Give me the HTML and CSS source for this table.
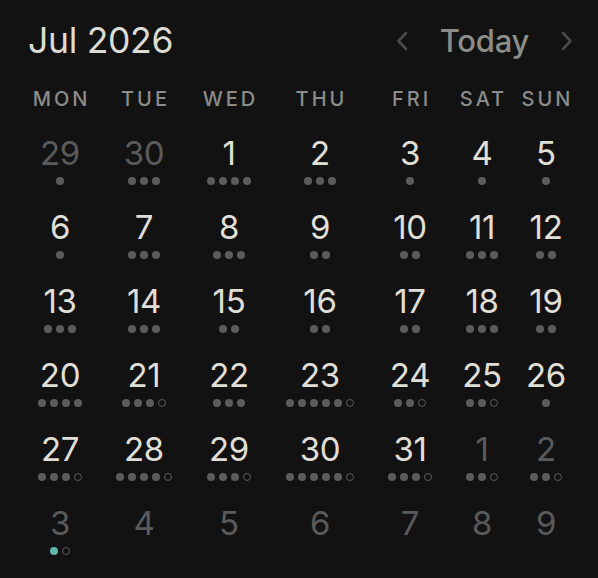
FILE: index.html
```html
<!DOCTYPE html>
<html>
<head>
<meta charset="utf-8">
<link rel="stylesheet" href="styles.css">
</head>
<body>
<div class="cal">
  <div class="head">
    <div class="title">Jul 2026</div>
    <div class="nav">
      <svg class="chev" width="12" height="20" viewBox="0 0 12 20"><path d="M10 2 L2.5 10 L10 18" fill="none" stroke="currentColor" stroke-width="2.6" stroke-linecap="round" stroke-linejoin="round"/></svg>
      <span class="today">Today</span>
      <svg class="chev" width="12" height="20" viewBox="0 0 12 20"><path d="M2 2 L9.5 10 L2 18" fill="none" stroke="currentColor" stroke-width="2.6" stroke-linecap="round" stroke-linejoin="round"/></svg>
    </div>
  </div>
  <div class="grid wk">
    <span>MON</span><span>TUE</span><span>WED</span><span>THU</span><span>FRI</span><span>SAT</span><span>SUN</span>
  </div>
  <div class="grid days">
    <div class="cell other"><span class="n">29</span><div class="dots"><i></i></div></div>
    <div class="cell other"><span class="n">30</span><div class="dots"><i></i><i></i><i></i></div></div>
    <div class="cell"><span class="n">1</span><div class="dots"><i></i><i></i><i></i><i></i></div></div>
    <div class="cell"><span class="n">2</span><div class="dots"><i></i><i></i><i></i></div></div>
    <div class="cell"><span class="n">3</span><div class="dots"><i></i></div></div>
    <div class="cell"><span class="n">4</span><div class="dots"><i></i></div></div>
    <div class="cell"><span class="n">5</span><div class="dots"><i></i></div></div>

    <div class="cell"><span class="n">6</span><div class="dots"><i></i></div></div>
    <div class="cell"><span class="n">7</span><div class="dots"><i></i><i></i><i></i></div></div>
    <div class="cell"><span class="n">8</span><div class="dots"><i></i><i></i><i></i></div></div>
    <div class="cell"><span class="n">9</span><div class="dots"><i></i><i></i></div></div>
    <div class="cell"><span class="n">10</span><div class="dots"><i></i><i></i></div></div>
    <div class="cell"><span class="n">11</span><div class="dots"><i></i><i></i><i></i></div></div>
    <div class="cell"><span class="n">12</span><div class="dots"><i></i><i></i></div></div>

    <div class="cell"><span class="n">13</span><div class="dots"><i></i><i></i><i></i></div></div>
    <div class="cell"><span class="n">14</span><div class="dots"><i></i><i></i><i></i></div></div>
    <div class="cell"><span class="n">15</span><div class="dots"><i></i><i></i></div></div>
    <div class="cell"><span class="n">16</span><div class="dots"><i></i><i></i></div></div>
    <div class="cell"><span class="n">17</span><div class="dots"><i></i><i></i></div></div>
    <div class="cell"><span class="n">18</span><div class="dots"><i></i><i></i><i></i></div></div>
    <div class="cell"><span class="n">19</span><div class="dots"><i></i><i></i></div></div>

    <div class="cell"><span class="n">20</span><div class="dots"><i></i><i></i><i></i><i></i></div></div>
    <div class="cell"><span class="n">21</span><div class="dots"><i></i><i></i><i></i><i class="o"></i></div></div>
    <div class="cell"><span class="n">22</span><div class="dots"><i></i><i></i><i></i></div></div>
    <div class="cell"><span class="n">23</span><div class="dots"><i></i><i></i><i></i><i></i><i></i><i class="o"></i></div></div>
    <div class="cell"><span class="n">24</span><div class="dots"><i></i><i></i><i class="o"></i></div></div>
    <div class="cell"><span class="n">25</span><div class="dots"><i></i><i></i><i class="o"></i></div></div>
    <div class="cell"><span class="n">26</span><div class="dots"><i></i></div></div>

    <div class="cell"><span class="n">27</span><div class="dots"><i></i><i></i><i></i><i class="o"></i></div></div>
    <div class="cell"><span class="n">28</span><div class="dots"><i></i><i></i><i></i><i></i><i class="o"></i></div></div>
    <div class="cell"><span class="n">29</span><div class="dots"><i></i><i></i><i></i><i class="o"></i></div></div>
    <div class="cell"><span class="n">30</span><div class="dots"><i></i><i></i><i></i><i></i><i></i><i class="o"></i></div></div>
    <div class="cell"><span class="n">31</span><div class="dots"><i></i><i></i><i></i><i class="o"></i></div></div>
    <div class="cell other"><span class="n">1</span><div class="dots"><i></i><i></i><i class="o"></i></div></div>
    <div class="cell other"><span class="n">2</span><div class="dots"><i></i><i></i><i class="o"></i></div></div>

    <div class="cell other"><span class="n">3</span><div class="dots"><i class="t"></i><i class="o"></i></div></div>
    <div class="cell other"><span class="n">4</span><div class="dots"></div></div>
    <div class="cell other"><span class="n">5</span><div class="dots"></div></div>
    <div class="cell other"><span class="n">6</span><div class="dots"></div></div>
    <div class="cell other"><span class="n">7</span><div class="dots"></div></div>
    <div class="cell other"><span class="n">8</span><div class="dots"></div></div>
    <div class="cell other"><span class="n">9</span><div class="dots"></div></div>
  </div>
</div>
</body>
</html>
```

FILE: styles.css
```css
html, body {
  margin: 0;
  padding: 0;
  background: #121212;
}
body {
  font-family: Inter, "Noto Sans", "DejaVu Sans", sans-serif;
  width: 598px;
  height: 578px;
  overflow: hidden;
}
.cal {
  padding: 21px 18px 0 18px;
}
.head {
  display: flex;
  align-items: center;
  justify-content: space-between;
  height: 40px;
  padding-left: 10px;
  padding-right: 7px;
}
.title {
  font-size: 35.5px;
  font-weight: 400;
  color: #dddcd4;
  letter-spacing: -0.3px;
  line-height: 40px;
}
.nav {
  display: flex;
  align-items: center;
  gap: 32px;
}
.chev {
  color: #4a4a4a;
  display: block;
}
.today {
  font-size: 31px;
  font-weight: 500;
  color: #8c8c89;
  line-height: 40px;
  letter-spacing: -0.3px;
}
.grid {
  display: grid;
  grid-template-columns: 84px 84px 86px 96px 84px 60px 68px;
}
.wk {
  margin-top: 26px;
  height: 24px;
  line-height: 24px;
  font-size: 20px;
  font-weight: 500;
  letter-spacing: 3px;
  color: #8c8c8a;
  text-align: center;
}
.wk span {
  padding-left: 3px;
}
.days {
  margin-top: 9px;
}
.cell {
  height: 74px;
  display: flex;
  flex-direction: column;
  align-items: center;
  padding-top: 17px;
  box-sizing: border-box;
}
.n {
  font-size: 33px;
  line-height: 32px;
  height: 32px;
  color: #e0dfd7;
  letter-spacing: -0.3px;
}
.other .n {
  color: #5a5a5a;
}
.dots {
  display: flex;
  gap: 4px;
  margin-top: 8px;
  height: 8px;
}
.dots i {
  width: 8px;
  height: 8px;
  border-radius: 50%;
  background: #5c5c5c;
  box-sizing: border-box;
}
.dots i.o {
  background: transparent;
  border: 1.6px solid #5c5c5c;
}
.dots i.t {
  background: #5fb5ad;
}
```
